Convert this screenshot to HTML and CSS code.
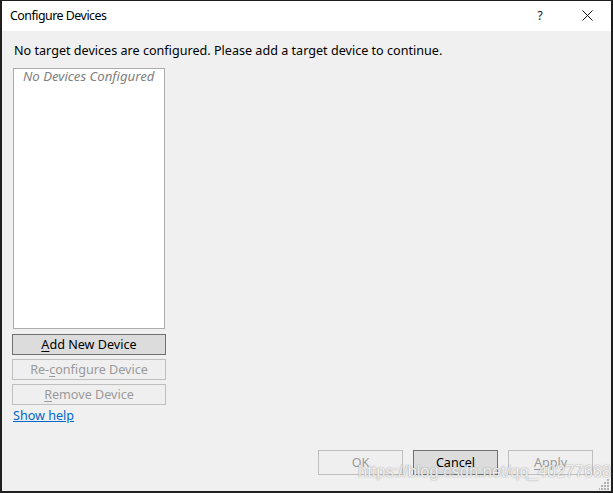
FILE: index.html
```html
<!DOCTYPE html>
<html>
<head>
<meta charset="utf-8">
<link rel="stylesheet" href="styles.css">
</head>
<body>
<div class="desk">
  <div class="window">
    <div class="titlebar">
      <span class="title">Configure Devices</span>
      <span class="tb-help">?</span>
      <span class="tb-close">
        <svg width="11" height="11" viewBox="0 0 11 11"><path d="M0.5 0.5 L10.5 10.5 M10.5 0.5 L0.5 10.5" stroke="#111" stroke-width="1" fill="none"/></svg>
      </span>
    </div>
    <div class="content">
      <p class="msg">No target devices are configured. Please add a target device to continue.</p>
      <div class="listbox"><span class="empty">No Devices Configured</span></div>
      <div class="side-buttons">
        <button class="btn default wide"><u>A</u>dd New Device</button>
        <button class="btn disabled wide">Re-<u>c</u>onfigure Device</button>
        <button class="btn disabled wide"><u>R</u>emove Device</button>
      </div>
      <a class="help" href="#">Show help</a>
      <div class="footer">
        <button class="btn disabled foot">OK</button>
        <button class="btn default foot">Cancel</button>
        <button class="btn disabled foot"><u>A</u>pply</button>
      </div>
    </div>
    <span class="watermark">https://blog.csdn.net/qq_40277668</span>
    <svg class="grip" width="11" height="11" viewBox="0 0 11 11">
      <g fill="#b0b0b0">
        <rect x="8" y="0" width="2" height="2"/>
        <rect x="5" y="3" width="2" height="2"/><rect x="8" y="3" width="2" height="2"/>
        <rect x="2" y="6" width="2" height="2"/><rect x="5" y="6" width="2" height="2"/><rect x="8" y="6" width="2" height="2"/>
        <rect x="-1" y="9" width="2" height="2"/><rect x="2" y="9" width="2" height="2"/><rect x="5" y="9" width="2" height="2"/><rect x="8" y="9" width="2" height="2"/>
      </g>
    </svg>
  </div>
</div>
</body>
</html>
```
FILE: styles.css
```css
* { box-sizing: border-box; }
html, body { margin: 0; padding: 0; }
body {
  background: #1f1f1f;
  width: 613px;
  height: 493px;
  overflow: hidden;
  font-family: "Noto Sans", "Open Sans", sans-serif;
}
.desk {
  padding: 1px 2px 2px 2px;
  height: 493px;
}
.window {
  position: relative;
  width: 609px;
  height: 490px;
  background: #f0f0f0;
  display: flex;
  flex-direction: column;
}
.titlebar {
  height: 30px;
  background: #ffffff;
  display: flex;
  align-items: center;
  padding-left: 8px;
  flex: none;
}
.title {
  font-size: 12.4px;
  letter-spacing: -0.5px;
  color: #000;
  flex: 1;
  margin-top: -1px;
}
.tb-help {
  font-size: 12px;
  color: #111;
  width: 46px;
  text-align: center;
  margin-top: -1px;
  padding-right: 4px;
}
.tb-close {
  width: 46px;
  display: flex;
  justify-content: center;
  padding-right: 2px;
}
.tb-close svg { display: block; margin-top: -2px; }
.content {
  flex: 1;
  display: flex;
  flex-direction: column;
  padding: 12px 18px 16px 11px;
}
.msg {
  margin: 0 0 9px 1px;
  font-size: 12.6px;
  line-height: 16px;
  color: #000;
  white-space: nowrap;
}
.listbox {
  width: 152px;
  height: 261px;
  background: #fff;
  border: 1px solid #acacac;
  padding: 0 0 0 9px;
  flex: none;
}
.empty {
  display: block;
  font-style: italic;
  font-size: 13.2px;
  color: #808080;
  line-height: 14px;
  white-space: nowrap;
}
.side-buttons {
  display: flex;
  flex-direction: column;
  gap: 4px;
  margin-top: 5px;
  margin-left: -1px;
}
.btn {
  font-family: "Noto Sans", "Open Sans", sans-serif;
  font-size: 12.6px;
  line-height: 14px;
  padding: 0;
  border: 1px solid #adadad;
  background: #e1e1e1;
  color: #000;
  text-align: center;
}
.btn u { text-decoration: underline; text-underline-offset: 2px; }
.btn.default {
  border-color: #707070;
  background: #dcdcdc;
}
.btn.disabled {
  border-color: #bfbfbf;
  background: #efefef;
  color: #9a9a9a;
}
.wide { width: 154px; height: 21px; }
.help {
  margin-top: 3px;
  font-size: 12.6px;
  line-height: 16px;
  color: #0066cc;
  text-decoration: underline;
  align-self: flex-start;
}
.footer {
  margin-top: auto;
  display: flex;
  justify-content: flex-end;
  gap: 10px;
}
.foot { width: 85px; height: 25px; }
.watermark {
  position: absolute;
  left: 356px;
  top: 461px;
  font-family: "Liberation Sans", Arial, sans-serif;
  font-size: 16.5px;
  color: rgba(255, 255, 255, 0.85);
  text-shadow: 0 0 1px rgba(120, 120, 120, 0.7), 0 0 2px rgba(160, 160, 160, 0.5);
  white-space: nowrap;
  pointer-events: none;
}
.grip {
  position: absolute;
  right: 1px;
  bottom: 1px;
}
```
